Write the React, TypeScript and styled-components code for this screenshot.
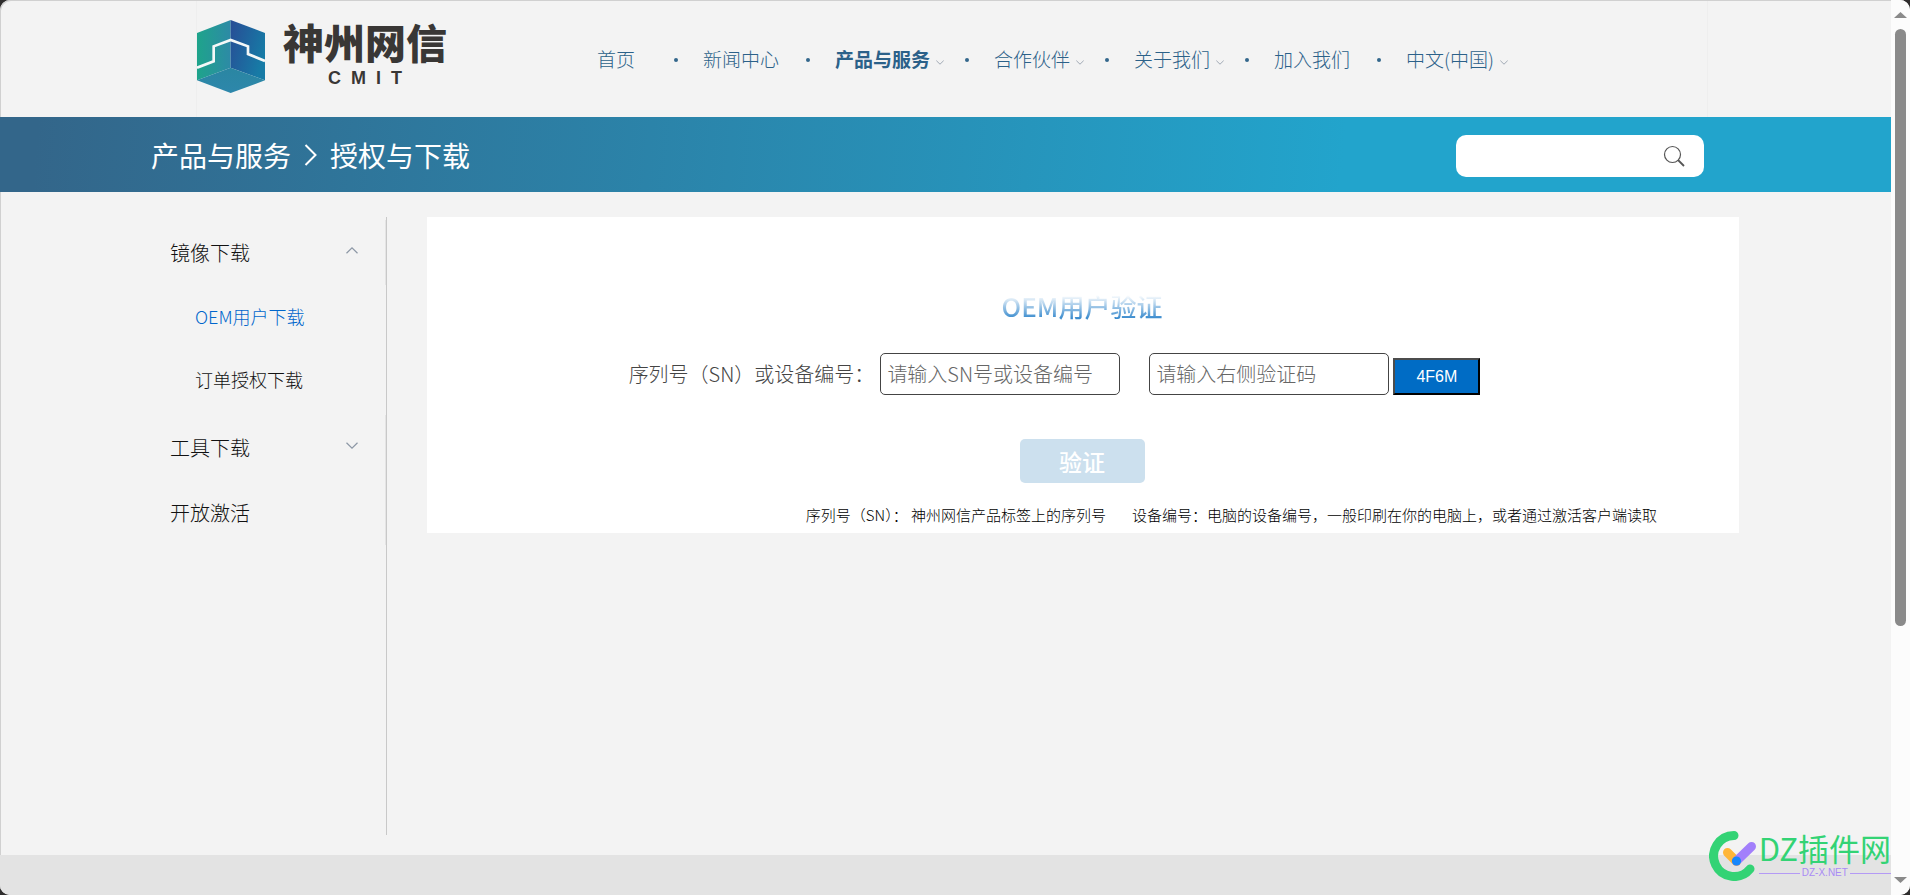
import React from 'react';
import styled, { createGlobalStyle, css } from 'styled-components';

const Global = createGlobalStyle`
  * { box-sizing: border-box; }
  body {
    margin: 0;
    background: #2f2d2d;
    font-family: "Noto Sans CJK SC", "Liberation Sans", sans-serif;
    font-weight: 300;
    color: #111;
  }
  ul { list-style: none; margin: 0; padding: 0; }
  a { color: inherit; text-decoration: none; }
  button, input { font-family: inherit; font-weight: inherit; }
`;

const Shell = styled.div`
  display: flex;
  min-height: 100vh;
  border-radius: 10px;
  overflow: hidden;
  background: #f3f3f3;
  box-shadow: inset 1px 1px 0 #d0d0d0;
`;

const Page = styled.div`
  position: relative;
  flex: 1;
  min-width: 0;
  display: flex;
  flex-direction: column;
  overflow: hidden;
`;

const Header = styled.header`
  height: 117px;
  padding: 1px 183px 0 196px;
`;

const HeaderInner = styled.div`
  display: flex;
  height: 100%;
  border: solid #eee;
  border-width: 0 1px;
`;

const Logo = styled.a`
  display: flex;
  align-items: flex-start;
  gap: 18px;
  width: 400px;
  padding-top: 19px;
  color: #393735;
`;

const Wordmark = styled.span`
  display: flex;
  flex-direction: column;
  align-items: center;
`;

const BrandName = styled.span`
  font-family: "Liberation Sans", "Noto Sans CJK SC", sans-serif;
  font-size: 41px;
  line-height: 50px;
  font-weight: 900;
`;

const BrandCode = styled.span`
  padding-left: 10px;
  font-family: "Liberation Sans", sans-serif;
  font-size: 18px;
  line-height: 16px;
  font-weight: 700;
  letter-spacing: 10px;
`;

const NavList = styled.ul`
  display: flex;
  height: 116px;
  align-items: center;
  font-size: 19px;
  line-height: 28px;
  color: #2b6189;
  white-space: nowrap;
`;

const NavItem = styled.li<{ $caret?: boolean }>`
  display: flex;
  align-items: center;
  &:first-child a { min-width: 50px; }
  &:not(:last-child)::after {
    content: "";
    width: 4px;
    height: 4px;
    border-radius: 50%;
    background: #33678c;
    margin: 1px 25px 0 ${p => (p.$caret ? 21 : 27)}px;
  }
`;

const NavLink = styled.a<{ $active?: boolean }>`
  display: flex;
  align-items: center;
  gap: 6px;
  font-weight: ${p => (p.$active ? 700 : 300)};
  svg { margin-top: 6px; }
`;

const Band = styled.section`
  display: flex;
  align-items: center;
  justify-content: space-between;
  height: 75px;
  padding: 2px 187px 0 151px;
  background: linear-gradient(95deg, #33668a 2%, #22a4cc 71%);
`;

const Crumbs = styled.nav`
  display: flex;
  align-items: center;
  gap: 13px;
  padding-bottom: 2px;
  font-size: 28px;
  line-height: 40px;
  font-weight: 400;
  color: #fff;
`;

const SearchBox = styled.form`
  display: flex;
  align-items: center;
  width: 248px;
  height: 42px;
  padding: 0 19px 0 12px;
  border-radius: 10px;
  background: #fff;
  input { flex: 1; min-width: 0; border: 0; outline: 0; background: none; font-size: 16px; }
  button { display: flex; padding: 0; border: 0; background: none; }
`;

const Main = styled.main`
  flex: 1;
  display: flex;
  align-items: stretch;
  gap: 40px;
  padding: 25px 152px 20px;
`;

const Sidebar = styled.nav`
  width: 235px;
  padding-top: 3px;
  border-right: 1px solid #c8c8c8;
`;

const row = css`
  display: flex;
  align-items: center;
  justify-content: space-between;
`;

const SideLink = styled.a`
  ${row}
  height: 65px;
  padding: 0 27px 0 18px;
  border-right: 1px solid #e4e4e4;
  font-size: 20px;
  svg { margin-bottom: 5px; }
`;

const SubList = styled.ul`
  padding-bottom: 4px;
`;

const SubLink = styled.a<{ $active?: boolean }>`
  ${row}
  height: 63px;
  padding: 0 0 2px 43px;
  font-size: 18px;
  color: ${p => (p.$active ? '#0066cc' : 'inherit')};
`;

const Card = styled.section`
  flex: 1;
  min-width: 0;
  align-self: flex-start;
  display: flex;
  flex-direction: column;
  align-items: center;
  padding: 71px 2px 5px 0;
  background: #fff;
`;

const Title = styled.h1`
  margin: 0;
  font-size: 26px;
  line-height: 36px;
  font-weight: 500;
  color: transparent;
  background: linear-gradient(180deg, #fff 20%, #0a6fc2 100%);
  background-clip: text;
  -webkit-background-clip: text;
`;

const Fields = styled.div`
  display: flex;
  align-items: flex-end;
  margin: 29px 55px 44px 0;
  font-size: 20px;
  color: #444;
  white-space: nowrap;
  label { line-height: 42px; margin-right: 6px; }
`;

const Field = styled.input`
  width: 240px;
  height: 42px;
  padding: 0 6px 2px;
  border: 1px solid #444;
  border-radius: 5px;
  background: #fff;
  font-size: 20px;
  &::placeholder { color: #666; }
  & + & { margin-left: 29px; }
`;

const Captcha = styled.button`
  width: 87px;
  height: 37px;
  margin-left: 4px;
  border: 2px solid;
  border-color: #4c4c4c #000 #000 #4c4c4c;
  background: #006cc5;
  color: #fff;
  font-family: "Liberation Sans", sans-serif;
  font-size: 16px;
`;

const Verify = styled.button`
  width: 125px;
  height: 44px;
  padding: 0;
  border: 0;
  border-radius: 5px;
  background: #cce0ee;
  color: #fff;
  font-size: 23px;
  line-height: 44px;
  font-weight: 500;
`;

const Notes = styled.p`
  align-self: flex-end;
  display: flex;
  gap: 26px;
  margin: 20px 80px 1px 0;
  font-size: 15px;
  line-height: 24px;
  color: #000;
`;

const Footer = styled.footer`
  height: 40px;
  background: #e3e3e3;
`;

const Watermark = styled.div`
  position: absolute;
  right: 0;
  bottom: 12px;
  display: flex;
  align-items: center;
  gap: 2px;
`;

const MarkText = styled.div`
  padding-bottom: 4px;
  white-space: nowrap;
  color: #33d375;
  font-size: 31px;
  line-height: 38px;
  font-weight: 400;
`;

const MarkUrl = styled.div`
  display: flex;
  align-items: center;
  gap: 2px;
  color: #a98bf5;
  font-family: "Liberation Sans", sans-serif;
  font-size: 10px;
  line-height: 12px;
  &::before, &::after { content: ""; flex: 1; height: 1px; background: #b49af5; }
`;

const Scrollbar = styled.div`
  width: 19px;
  display: flex;
  flex-direction: column;
  align-items: center;
  padding: 12px 0;
  background: #fcfcfc;
`;

const Thumb = styled.div`
  width: 11px;
  height: 66.7vh;
  margin: 11px 0 auto;
  border-radius: 6px;
  background: #8a8a8a;
`;

const Caret = ({ w = 8, up = false }: { w?: number; up?: boolean }) => (
  <svg width={w} height={w / 2 + 1} viewBox="0 0 12 7" fill="none" stroke="#8c97a5" strokeWidth="1.2">
    <path d={up ? 'M.5 6.3 6 .9l5.500 5.400' : 'M.5.7 6 6.100 11.500.7'} />
  </svg>
);

const Arrow = ({ down = false }: { down?: boolean }) => (
  <svg width="13" height="6" viewBox="0 0 13 6" fill="#8a8a8a">
    <path d={down ? 'M0 0h13L6.500 6z' : 'M0 6h13L6.500 0z'} />
  </svg>
);

const CubeLogo = () => (
  <svg width="68" height="73" viewBox="51 60 204 219">
    <defs>
      <linearGradient id="left" x1="0" y1="0" x2="1" y2="0">
        <stop offset="0" stopColor="#1ea48b" />
        <stop offset="1" stopColor="#2d8aa6" />
      </linearGradient>
      <linearGradient id="right" x1="0" y1="0" x2="1" y2=".5">
        <stop offset="0" stopColor="#284c95" />
        <stop offset="1" stopColor="#177ba6" />
      </linearGradient>
      <linearGradient id="base" x1="0" y1="0" x2="0" y2="1">
        <stop offset="0" stopColor="#2a86a2" />
        <stop offset="1" stopColor="#2d87ab" />
      </linearGradient>
    </defs>
    <path d="M51 99 152 60V203L51 241z" fill="url(#left)" />
    <path d="M152 60 255 99V241L152 203z" fill="url(#right)" />
    <path d="M51 241 152 203 255 241 152 279z" fill="url(#base)" />
    <path d="M51 203 101 184V139L152 120 204 139V162L255 183" fill="none" stroke="#f4f8f8" strokeWidth="8" />
  </svg>
);

const nav = [
  { text: '首页' },
  { text: '新闻中心' },
  { text: '产品与服务', caret: true, active: true },
  { text: '合作伙伴', caret: true },
  { text: '关于我们', caret: true },
  { text: '加入我们' },
  { text: '中文(中国)', caret: true },
];

export default function App() {
  return (
    <>
      <Global />
      <Shell>
        <Page>
          <Header>
            <HeaderInner>
              <Logo href="#">
                <CubeLogo />
                <Wordmark>
                  <BrandName>神州网信</BrandName>
                  <BrandCode>CMIT</BrandCode>
                </Wordmark>
              </Logo>
              <nav>
                <NavList>
                  {nav.map(n => (
                    <NavItem key={n.text} $caret={n.caret}>
                      <NavLink href="#" $active={n.active}>
                        {n.text}
                        {n.caret && <Caret />}
                      </NavLink>
                    </NavItem>
                  ))}
                </NavList>
              </nav>
            </HeaderInner>
          </Header>
          <Band>
            <Crumbs>
              <a href="#">产品与服务</a>
              <svg width="13" height="22" viewBox="0 0 13 22" fill="none" stroke="#fff" strokeWidth="2">
                <path d="M1.500 1 11.500 11 1.500 21" />
              </svg>
              <a href="#">授权与下载</a>
            </Crumbs>
            <SearchBox>
              <input type="search" aria-label="搜索" />
              <button type="button" aria-label="搜索">
                <svg width="22" height="22" viewBox="0 0 22 22" fill="none" stroke="#555" strokeWidth="1.200">
                  <circle cx="9.500" cy="9.500" r="8" />
                  <path d="m15 15 6 6" strokeWidth="1.800" />
                </svg>
              </button>
            </SearchBox>
          </Band>
          <Main>
            <Sidebar>
              <ul>
                <li>
                  <SideLink href="#">镜像下载<Caret w={12} up /></SideLink>
                  <SubList>
                    <li><SubLink href="#" $active>OEM用户下载</SubLink></li>
                    <li><SubLink href="#">订单授权下载</SubLink></li>
                  </SubList>
                </li>
                <li><SideLink href="#">工具下载<Caret w={12} /></SideLink></li>
                <li><SideLink href="#">开放激活</SideLink></li>
              </ul>
            </Sidebar>
            <Card>
              <Title>OEM用户验证</Title>
              <Fields>
                <label htmlFor="sn">序列号（SN）或设备编号：</label>
                <Field id="sn" placeholder="请输入SN号或设备编号" />
                <Field aria-label="验证码" placeholder="请输入右侧验证码" />
                <Captcha type="button">4F6M</Captcha>
              </Fields>
              <Verify type="button">验证</Verify>
              <Notes>
                <span>序列号（SN）： 神州网信产品标签上的序列号</span>
                <span>设备编号：电脑的设备编号，一般印刷在你的电脑上，或者通过激活客户端读取</span>
              </Notes>
            </Card>
          </Main>
          <Footer />
          <Watermark>
            <svg width="48" height="50" viewBox="0 0 48 50" fill="none" strokeLinecap="round">
              <path d="M25 4.500A20.500 20.500 0 1 0 41 38" stroke="#33d375" strokeWidth="9" />
              <path d="m18.500 21.500 9 9" stroke="#ffb638" strokeWidth="9" />
              <path d="M42.500 15.500 27.500 30" stroke="#a27ffb" strokeWidth="9" />
              <circle cx="27.500" cy="30" r="4.600" fill="#1787fb" />
            </svg>
            <MarkText>
              DZ插件网
              <MarkUrl>DZ-X.NET</MarkUrl>
            </MarkText>
          </Watermark>
        </Page>
        <Scrollbar>
          <Arrow />
          <Thumb />
          <Arrow down />
        </Scrollbar>
      </Shell>
    </>
  );
}
